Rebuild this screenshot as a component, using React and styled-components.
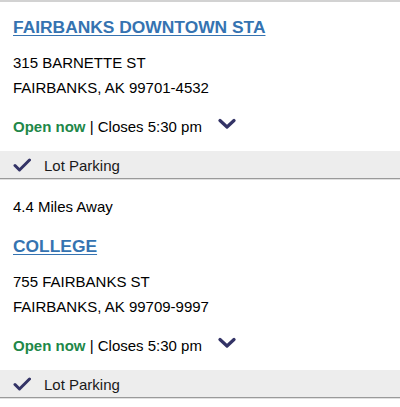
import React from "react";
import styled, { createGlobalStyle } from "styled-components";

const GlobalStyle = createGlobalStyle`
  body {
    margin: 0;
    background: #ffffff;
    font-family: "Liberation Sans", Arial, sans-serif;
    color: #000000;
  }
`;

const List = styled.div`
  width: 400px;
  border-top: 2px solid #d2d2d2;
`;

const Location = styled.div`
  display: flex;
  flex-direction: column;
  padding-top: 14px;
`;

const Distance = styled.div`
  font-size: 15px;
  line-height: 25px;
  padding: 0 13px;
  margin-bottom: 16px;
`;

const Title = styled.a`
  align-self: flex-start;
  font-size: 17.4px;
  line-height: 22px;
  font-weight: bold;
  color: #3573b1;
  text-decoration: underline;
  text-underline-offset: 2px;
  margin: 0 13px 12px;
  cursor: pointer;
`;

const Address = styled.div`
  font-size: 15px;
  line-height: 25px;
  padding: 0 13px;
  margin-bottom: 14px;
`;

const Hours = styled.div`
  display: flex;
  align-items: center;
  font-size: 15px;
  line-height: 25px;
  padding: 0 13px;
  margin-bottom: 12px;
`;

const Open = styled.span`
  color: #218748;
  font-weight: bold;
`;

const Chevron = styled.svg`
  margin-left: 16px;
  width: 18px;
  height: 12px;
  margin-top: -6px;
`;

const Amenity = styled.div`
  display: flex;
  align-items: center;
  height: 28px;
  padding: 1px 13px 0;
  box-sizing: border-box;
  background: #ededed;
  border-bottom: 1px solid #9a9a9a;
  box-shadow: 0 1px 0 #e0e0e0;
  font-size: 15px;
  color: #1a1a1a;
  margin-bottom: 1px;
`;

const Check = styled.svg`
  width: 18px;
  height: 14px;
  margin-right: 13px;
`;

const locations = [
  {
    name: "FAIRBANKS DOWNTOWN STA",
    street: "315 BARNETTE ST",
    city: "FAIRBANKS, AK 99701-4532",
  },
  {
    distance: "4.4 Miles Away",
    name: "COLLEGE",
    street: "755 FAIRBANKS ST",
    city: "FAIRBANKS, AK 99709-9997",
  },
];

export default function App() {
  return (
    <>
      <GlobalStyle />
      <List>
        {locations.map((loc) => (
          <Location key={loc.name}>
            {loc.distance && <Distance>{loc.distance}</Distance>}
            <Title>{loc.name}</Title>
            <Address>
              {loc.street}
              <br />
              {loc.city}
            </Address>
            <Hours>
              <span>
                <Open>Open now</Open> | Closes 5:30 pm
              </span>
              <Chevron viewBox="0 0 18 12">
                <path
                  d="M2 2.5 L9 9 L16 2.5"
                  fill="none"
                  stroke="#333366"
                  strokeWidth="3.2"
                  strokeLinecap="round"
                  strokeLinejoin="round"
                />
              </Chevron>
            </Hours>
            <Amenity>
              <Check viewBox="0 0 18 14">
                <path
                  d="M2 7.5 L6.5 12 L16.5 2"
                  fill="none"
                  stroke="#333366"
                  strokeWidth="3"
                  strokeLinecap="round"
                  strokeLinejoin="round"
                />
              </Check>
              Lot Parking
            </Amenity>
          </Location>
        ))}
      </List>
    </>
  );
}
